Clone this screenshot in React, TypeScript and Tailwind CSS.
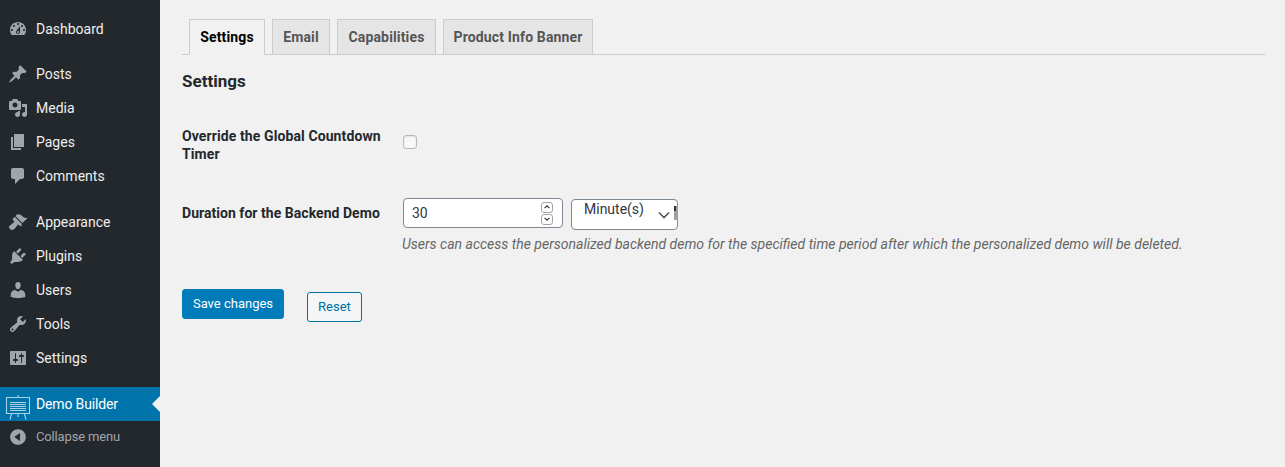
import React from "react";

// Dashicons paths used by the admin menu
const icons: Record<string, string> = {
  dashboard:
    "M3.76 16h12.48c1.1-1.37 1.76-3.11 1.76-5 0-4.42-3.58-8-8-8s-8 3.58-8 8c0 1.89.66 3.63 1.76 5zM10 4c.55 0 1 .45 1 1s-.45 1-1 1-1-.45-1-1 .45-1 1-1zM6 6c.55 0 1 .45 1 1s-.45 1-1 1-1-.45-1-1 .45-1 1-1zm8 0c.55 0 1 .45 1 1s-.45 1-1 1-1-.45-1-1 .45-1 1-1zm-5.37 5.55L12 7v6c0 1.1-.9 2-2 2s-2-.9-2-2c0-.57.24-1.08.63-1.45zM4 10c.55 0 1 .45 1 1s-.45 1-1 1-1-.45-1-1 .45-1 1-1zm12 0c.55 0 1 .45 1 1s-.45 1-1 1-1-.45-1-1 .45-1 1-1zm-5 3c0-.55-.45-1-1-1s-1 .45-1 1 .45 1 1 1 1-.45 1-1z",
  posts:
    "M10.44 3.02l1.82-1.82 6.36 6.35-1.83 1.82c-1.05-.68-2.48-.57-3.41.36l-.75.75c-.92.93-1.04 2.35-.35 3.41l-1.83 1.82-2.41-2.41-2.8 2.79c-.42.42-3.38 2.71-3.8 2.29s1.86-3.39 2.28-3.81l2.79-2.79L4.1 9.36l1.83-1.82c1.05.69 2.48.57 3.4-.36l.75-.75c.93-.92 1.05-2.35.36-3.41z",
  media:
    "M13 11V4c0-.55-.45-1-1-1h-1.67L9 1H5L3.67 3H2c-.55 0-1 .45-1 1v7c0 .55.45 1 1 1h10c.55 0 1-.45 1-1zM7 4.5c1.38 0 2.5 1.12 2.5 2.5S8.38 9.5 7 9.5 4.5 8.38 4.5 7 5.62 4.5 7 4.5zM14 6h5v10.5c0 1.38-1.12 2.5-2.5 2.5S14 17.88 14 16.5s1.12-2.5 2.5-2.5c.17 0 .34.02.5.05V9h-3V6zm-4 8.05V13h2v3.5c0 1.38-1.12 2.5-2.5 2.5S7 17.88 7 16.5 8.12 14 9.5 14c.17 0 .34.02.5.05z",
  pages: "M6 15V2h10v13H6zm-1 1h8v2H3V5h2v11z",
  comments:
    "M5 2h9c1.1 0 2 .9 2 2v7c0 1.1-.9 2-2 2h-2l-5 5v-5H5c-1.1 0-2-.9-2-2V4c0-1.1.9-2 2-2z",
  appearance:
    "M14.48 11.06L7.41 3.99l1.5-1.5c.5-.56 2.3-.47 3.51.32 1.21.8 1.43 1.28 2.91 2.1 1.18.64 2.45 1.26 4.45.85zm-.71.71L6.7 4.7 4.93 6.47c-.39.39-.39 1.02 0 1.41l1.06 1.06c.39.39.39 1.03 0 1.42-.6.6-1.43 1.11-2.21 1.69-.35.26-.7.53-1.01.84C1.43 13.23.4 14.96 1.5 16.5c.2.28.72.8 1 1 1.54 1.1 3.27.07 4.61-1.27.31-.31.58-.66.84-1.01.58-.78 1.09-1.61 1.69-2.21.39-.39 1.02-.39 1.41 0l1.06 1.06c.39.39 1.02.39 1.41 0z",
  plugins:
    "M13.11 4.36L9.87 7.6 8 5.73l3.24-3.24c.35-.34 1.05-.2 1.56.32.52.51.66 1.21.31 1.55zm-8 1.77l.91-1.12 9.01 9.01-1.19.84c-.71.71-2.63 1.16-3.82 1.16H6.14L4.9 17.26c-.59.59-1.54.59-2.12 0-.59-.58-.59-1.53 0-2.12l1.24-1.24v-3.88c0-1.13.4-3.19 1.09-3.89zm7.26 3.97l3.24-3.24c.34-.35 1.04-.21 1.55.31.52.51.66 1.21.31 1.55l-3.24 3.25z",
  users:
    "M10 9.25c-2.27 0-2.73-3.44-2.73-3.44C7 4.02 7.82 2 9.97 2c2.16 0 2.98 2.02 2.71 3.81 0 0-.41 3.44-2.68 3.44zm0 2.57L12.72 10c2.39 0 4.52 2.33 4.52 4.53v2.49s-3.65 1.13-7.24 1.13c-3.65 0-7.24-1.13-7.24-1.13v-2.49c0-2.25 1.94-4.48 4.47-4.48z",
  tools:
    "M16.68 9.77c-1.34 1.34-3.3 1.67-4.95.99l-5.41 6.52c-.99.99-2.59.99-3.58 0s-.99-2.59 0-3.57l6.52-5.42c-.68-1.65-.35-3.61.99-4.95 1.28-1.28 3.12-1.62 4.72-1.06l-2.89 2.89 2.82 2.82 2.86-2.87c.53 1.58.18 3.39-1.08 4.65zM3.81 16.21c.4.39 1.04.39 1.43 0 .4-.4.4-1.04 0-1.43-.39-.4-1.03-.4-1.43 0-.39.39-.39 1.03 0 1.43z",
  settings:
    "M18 16V4c0-.55-.45-1-1-1H3c-.55 0-1 .45-1 1v12c0 .55.45 1 1 1h14c.55 0 1-.45 1-1zM8 11h1c.55 0 1 .45 1 1s-.45 1-1 1H8v1.5c0 .28-.22.5-.5.5s-.5-.22-.5-.5V13H6c-.55 0-1-.45-1-1s.45-1 1-1h1V5.5c0-.28.22-.5.5-.5s.5.22.5.5V11zm5-2h-1c-.55 0-1-.45-1-1s.45-1 1-1h1V5.5c0-.28.22-.5.5-.5s.5.22.5.5V7h1c.55 0 1 .45 1 1s-.45 1-1 1h-1v5.5c0 .28-.22.5-.5.5s-.5-.22-.5-.5V9z",
  collapse:
    "M10 2.16c4.33 0 7.84 3.51 7.84 7.84s-3.51 7.84-7.84 7.84S2.16 14.33 2.16 10 5.71 2.16 10 2.16zm2 11.72V6.12L6.18 9.97z",
};

const Dashicon = ({ name }: { name: string }) => (
  <svg viewBox="0 0 20 20" className="h-5 w-5 shrink-0 fill-[#a0a5aa]">
    <path d={icons[name]} />
  </svg>
);

const MenuItem = ({ icon, label }: { icon: string; label: string }) => (
  <div className="flex h-[34px] items-center gap-[8px] pl-[8px] text-[14px] text-[#eeeeee]">
    <Dashicon name={icon} />
    <span>{label}</span>
  </div>
);

// Presentation board icon next to Demo Builder
const EaselIcon = () => (
  <svg viewBox="0 0 26 26" className="absolute left-[5px] top-[7px] h-[26px] w-[26px] fill-none stroke-[#a3d4ea]">
    <path d="M13 1v2.5M1.5 3.5h23v16h-23zM5 8.5h16M5 10.5h16M5 12.5h16M5 14.5h16M5 16.5h16M6.5 20l-1.5 5.5M19.5 20l1.5 5.5M13 20v3" strokeWidth="1.1" />
  </svg>
);

const Sidebar = () => (
  <aside className="w-[160px] shrink-0 bg-[#23282d] pt-[12px]">
    <MenuItem icon="dashboard" label="Dashboard" />
    <div className="mt-[11px]">
      <MenuItem icon="posts" label="Posts" />
      <MenuItem icon="media" label="Media" />
      <MenuItem icon="pages" label="Pages" />
      <MenuItem icon="comments" label="Comments" />
    </div>
    <div className="mt-[12px]">
      <MenuItem icon="appearance" label="Appearance" />
      <MenuItem icon="plugins" label="Plugins" />
      <MenuItem icon="users" label="Users" />
      <MenuItem icon="tools" label="Tools" />
      <MenuItem icon="settings" label="Settings" />
    </div>
    <div className="relative mt-[12px] flex h-[34px] items-center bg-[#0073aa] pl-[36px] text-[14px] tracking-[-0.15px] text-white">
      <EaselIcon />
      <span>Demo Builder</span>
      <div className="absolute right-0 top-[9px] h-0 w-0 border-y-[8px] border-r-[8px] border-y-transparent border-r-[#f1f1f1]" />
    </div>
    <div className="flex h-[32px] items-center gap-[8px] pl-[8px] text-[13px] tracking-[-0.15px] text-[#a0a5aa]">
      <Dashicon name="collapse" />
      <span>Collapse menu</span>
    </div>
  </aside>
);

const Tab = ({ label, width, active }: { label: string; width: string; active?: boolean }) => (
  <div
    className={`-mb-px flex h-[36px] items-center justify-center border border-[#cccccc] text-[14px] font-bold tracking-[0.15px] ${width} ${
      active ? "border-b-[#f1f1f1] bg-[#f1f1f1] text-black" : "bg-[#e5e5e5] text-[#555555]"
    }`}
  >
    {label}
  </div>
);

const Main = () => (
  <main className="flex-1 pl-[22px] pr-[20px] pt-[19px]">
    <div className="flex gap-[7px] border-b border-[#cccccc] pl-[7px]">
      <Tab label="Settings" width="w-[76px]" active />
      <Tab label="Email" width="w-[58px]" />
      <Tab label="Capabilities" width="w-[99px]" />
      <Tab label="Product Info Banner" width="w-[150px]" />
    </div>

    <h2 className="mt-[16px] text-[17px] leading-[21px] font-bold text-[#23282d]">Settings</h2>

    <div className="mt-[35px] flex items-start">
      <label className="w-[221px] text-[14px] leading-[18px] font-bold tracking-[0.1px] text-[#23282d]">
        Override the Global Countdown Timer
      </label>
      <div className="mt-[8px] h-[14px] w-[14px] rounded-[3px] border border-[#b4b9be] bg-[#f8f8f8] shadow-[inset_0_1px_2px_rgba(0,0,0,0.1)]" />
    </div>

    <div className="mt-[35px] flex">
      <label className="mt-[6px] w-[221px] text-[14px] leading-[18px] font-bold tracking-[0.04px] text-[#23282d]">
        Duration for the Backend Demo
      </label>
      <div>
        <div className="flex gap-[8px]">
          <div className="flex h-[30px] w-[160px] items-center justify-between rounded-[4px] border border-[#7e8993] bg-white pl-[8px] pr-[9px] text-[14px] text-[#32373c]">
            <span>30</span>
            <div className="flex flex-col gap-px">
              <div className="flex h-[11px] w-[12px] items-center justify-center rounded-[3px] border border-[#a0a5aa]">
                <svg viewBox="0 0 10 10" className="h-[8px] w-[8px] fill-none stroke-[#32373c]"><path d="M2 6.5l3-3 3 3" strokeWidth="1.4" /></svg>
              </div>
              <div className="flex h-[11px] w-[12px] items-center justify-center rounded-[3px] border border-[#a0a5aa]">
                <svg viewBox="0 0 10 10" className="h-[8px] w-[8px] fill-none stroke-[#32373c]"><path d="M2 3.5l3 3 3-3" strokeWidth="1.4" /></svg>
              </div>
            </div>
          </div>
          <div className="relative mt-px h-[31px] w-[107px] rounded-[4px] border border-[#7e8993] bg-white pl-[12px] text-[14px] leading-[18px] text-[#32373c]">
            Minute(s)
            {/* chevron and the clipped scroll marker */}
            <svg viewBox="0 0 14 10" className="absolute left-[85px] top-[10px] h-[10px] w-[14px] fill-none stroke-[#50575e]"><path d="M2 2.5l5 5 5-5" strokeWidth="1.6" /></svg>
            <div className="absolute right-[-1px] top-[6px] h-[14px] w-[4px] bg-[#a0a0a0]" />
            <div className="absolute right-[1px] top-[6px] h-[5px] w-[2px] bg-[#333333]" />
          </div>
        </div>
        <p className="mt-[4px] -ml-px text-[14px] leading-[20px] italic text-[#666666]">
          Users can access the personalized backend demo for the specified time period after which the personalized demo will be deleted.
        </p>
      </div>
    </div>

    <div className="mt-[35px] flex items-start gap-[23px]">
      <button className="h-[30px] w-[102px] rounded-[3px] border border-[#007cba] bg-[#007cba] text-[13px] text-white">
        Save changes
      </button>
      <button className="mt-[3px] h-[30px] w-[55px] rounded-[3px] border border-[#0071a1] bg-[#f3f5f6] text-[13px] text-[#0071a1]">
        Reset
      </button>
    </div>
  </main>
);

export default function App() {
  return (
    <div className="flex h-[467px] w-[1285px] overflow-hidden bg-[#f1f1f1] font-['Roboto',sans-serif]">
      <Sidebar />
      <Main />
    </div>
  );
}
